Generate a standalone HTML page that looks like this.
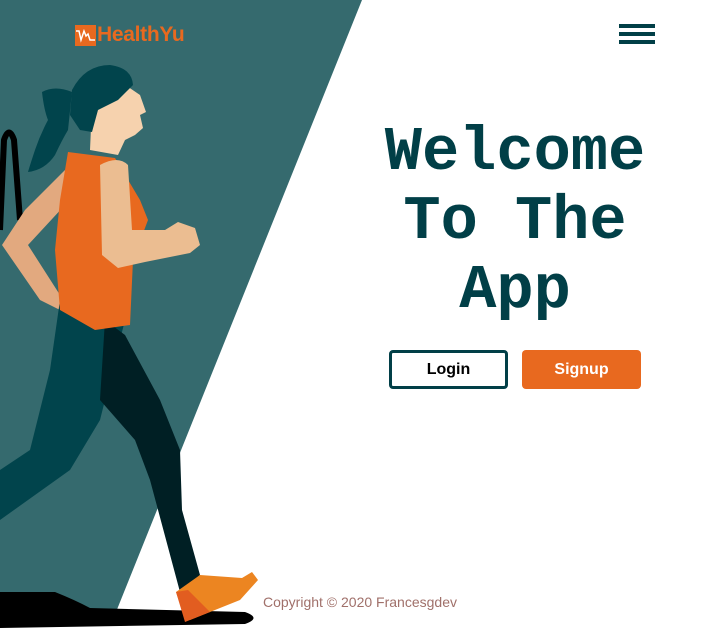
<!DOCTYPE html>
<html><head><meta charset="utf-8"><style>
html,body{margin:0;padding:0;width:728px;height:628px;overflow:hidden;background:#fff;font-family:"Liberation Sans",sans-serif;position:relative}
svg.bg{position:absolute;left:0;top:0}
.logo{position:absolute;left:75px;top:23px;display:flex;align-items:center;color:#e8691f;font-weight:bold;font-size:21px;letter-spacing:-0.3px}
.logo .ic{width:21px;height:21px;background:#e8691f;margin-right:1px}
.ham{position:absolute;left:619px;top:24px;width:36px}
.ham div{height:4px;background:#013f47;margin-bottom:4px}
h1{position:absolute;left:360px;width:310px;top:118px;margin:0;text-align:center;font-family:"Liberation Mono",monospace;font-weight:bold;font-size:62px;line-height:69px;color:#013f47}
.btn{position:absolute;top:350px;width:119px;height:39px;box-sizing:border-box;border-radius:4px;font-weight:bold;font-size:16px;display:flex;align-items:center;justify-content:center}
.login{left:389px;border:3px solid #013f47;color:#000;background:#fff}
.signup{left:522px;background:#e8691f;color:#fff}
.copy{position:absolute;left:263px;top:594px;font-size:14px;color:#a0706a}
</style></head><body>
<svg class="bg" width="728" height="628" viewBox="0 0 728 628">
<polygon points="0,0 362,0 116,612 0,612" fill="#356a6e"/>
<path d="M0,230 L4,140 Q9,125 14,140 L20,220" stroke="#000" stroke-width="6" fill="none"/>
<path d="M0,592 L55,592 Q75,600 90,608 L245,612 Q262,618 245,624 L0,628 Z" fill="#000"/>
<path d="M65,170 L25,210 L2,245 L40,300 L60,310 L60,295 L28,245 L65,205 Z" fill="#e2a97f"/>
<path d="M60,300 L125,320 L100,420 L70,470 L0,520 L0,470 L30,450 L50,370 Z" fill="#01444c"/>
<path d="M105,320 L125,335 L160,400 L180,450 L182,510 L200,575 L180,592 L150,480 L135,440 L100,400 Z" fill="#001f24"/>
<path d="M176,592 L200,575 L242,578 L252,572 L258,580 L240,600 L190,620 L182,610 Z" fill="#ec8521"/>
<path d="M176,592 L188,590 L210,612 L185,622 Z" fill="#e25d20"/>
<path d="M68,152 L115,158 L140,200 L148,220 L133,260 L130,325 L95,330 L60,310 L55,250 L60,200 Z" fill="#e8691f"/>
<path d="M90,150 L92,105 L118,80 L140,95 L146,112 L140,115 L143,128 L135,135 L125,140 L118,155 Z" fill="#f6d2ae"/>
<path d="M72,90 Q85,65 110,65 Q132,68 133,85 L118,100 L108,105 L98,110 L92,132 L80,130 L70,115 Z" fill="#01444c"/>
<path d="M72,92 Q55,85 42,92 Q44,110 48,120 Q40,135 35,150 Q30,165 28,172 Q45,170 55,155 Q62,140 68,130 Z" fill="#01444c"/>
<path d="M100,165 Q118,155 128,165 L132,230 L165,230 L178,222 L195,228 L200,245 L190,253 L145,262 L118,268 L102,255 Z" fill="#ebbd91"/>
</svg>
<div class="logo"><div class="ic"><svg width="21" height="21" viewBox="0 0 21 21"><path d="M1,6 L4,6 L6,15 L9,6 L11,11 L13,9 L15,15 L20,15" stroke="#fff" stroke-width="1.5" fill="none"/></svg></div>HealthYu</div>
<div class="ham"><div></div><div></div><div></div></div>
<h1>Welcome<br>To The<br>App</h1>
<div class="btn login">Login</div>
<div class="btn signup">Signup</div>
<div class="copy">Copyright © 2020 Francesgdev</div>
</body></html>
